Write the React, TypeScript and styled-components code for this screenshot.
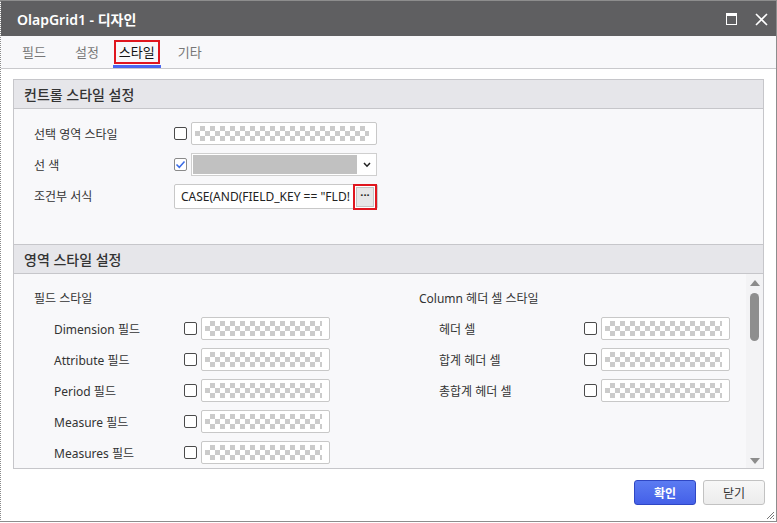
import React from 'react';
import styled, { createGlobalStyle } from 'styled-components';

const GlobalStyle = createGlobalStyle`
    html, body {
        margin: 0;
        padding: 0;
        background: #ffffff;
    }
    body {
        font-family: "Noto Sans", "Noto Sans CJK KR", sans-serif;
        color: #333;
    }
`;

interface StyleRow {
    label: string;
}

interface TabInfo {
    name: string;
    gap: number;
}

const fieldRows: StyleRow[] = [
    { label: 'Dimension 필드' },
    { label: 'Attribute 필드' },
    { label: 'Period 필드' },
    { label: 'Measure 필드' },
    { label: 'Measures 필드' },
];

const headerRows: StyleRow[] = [
    { label: '헤더 셀' },
    { label: '합계 헤더 셀' },
    { label: '총합계 헤더 셀' },
];

// gap = space after each tab
const tabs: TabInfo[] = [
    { name: '필드', gap: 17 },
    { name: '설정', gap: 8 },
    { name: '스타일', gap: 11 },
    { name: '기타', gap: 0 },
];

const MaximizeIcon = () => (
    <svg width="11" height="12" viewBox="0 0 11 12">
        <rect x="0.5" y="0.5" width="10" height="11" fill="none" stroke="#fff" strokeWidth="1" />
        <rect x="0" y="0" width="11" height="3" fill="#fff" />
    </svg>
);

const CloseIcon = () => (
    <svg width="13" height="13" viewBox="0 0 13 13">
        <path d="M1 1 L12 12 M12 1 L1 12" stroke="#fff" strokeWidth="1.6" />
    </svg>
);

const CheckMark = () => (
    <svg width="11" height="11" viewBox="0 0 11 11">
        <path d="M1.5 5.5 L4.3 8.3 L9.5 2.5" fill="none" stroke="#3a6be6" strokeWidth="1.5" />
    </svg>
);

const Chevron = () => (
    <svg width="8" height="6" viewBox="0 0 8 6">
        <path d="M1 1 L4 4.2 L7 1" fill="none" stroke="#222" strokeWidth="1.5" />
    </svg>
);

const ResizeGrip = () => (
    <svg width="9" height="9" viewBox="0 0 9 9">
        <path d="M8 1 L1 8 M8 4 L4 8 M8 7 L7 8" stroke="#777" strokeWidth="1" />
    </svg>
);

const App = () => {
    return (
        <>
            <GlobalStyle />
            <Window>
                <TitleBar>
                    <Title>OlapGrid1 - 디자인</Title>
                    <TitleIcons>
                        <MaximizeIcon />
                        <CloseIcon />
                    </TitleIcons>
                </TitleBar>

                <TabBar>
                    {tabs.map(tab => (
                        <Tab key={tab.name} active={tab.name === '스타일'} gap={tab.gap}>
                            <TabLabel marked={tab.name === '스타일'}>{tab.name}</TabLabel>
                        </Tab>
                    ))}
                </TabBar>

                <Content>
                    <Panel>
                        <SectionHeader>컨트롤 스타일 설정</SectionHeader>
                        <ControlBody>
                            <FormRow>
                                <FormLabel>선택 영역 스타일</FormLabel>
                                <CheckBox />
                                <Swatch wide />
                            </FormRow>
                            <FormRow>
                                <FormLabel>선 색</FormLabel>
                                <CheckBox checked><CheckMark /></CheckBox>
                                <ColorSelect>
                                    <ColorFill />
                                    <SelectArrow><Chevron /></SelectArrow>
                                </ColorSelect>
                            </FormRow>
                            <FormRow>
                                <FormLabel>조건부 서식</FormLabel>
                                <ExprInput>
                                    <ExprText>CASE(AND(FIELD_KEY == "FLD!</ExprText>
                                    <DotsButton>···</DotsButton>
                                </ExprInput>
                            </FormRow>
                        </ControlBody>

                        <SectionHeader bordered>영역 스타일 설정</SectionHeader>
                        <AreaBody>
                            <AreaScroll>
                                <AreaColumn fixed>
                                    <GroupTitle>필드 스타일</GroupTitle>
                                    {fieldRows.map(row => (
                                        <ItemRow key={row.label} labelWidth={130}>
                                            <ItemLabel>{row.label}</ItemLabel>
                                            <CheckBox />
                                            <Swatch />
                                        </ItemRow>
                                    ))}
                                </AreaColumn>
                                <AreaColumn>
                                    <GroupTitle>Column 헤더 셀 스타일</GroupTitle>
                                    {headerRows.map(row => (
                                        <ItemRow key={row.label} labelWidth={145}>
                                            <ItemLabel>{row.label}</ItemLabel>
                                            <CheckBox />
                                            <Swatch />
                                        </ItemRow>
                                    ))}
                                </AreaColumn>
                            </AreaScroll>
                            <ScrollBar>
                                <ArrowUp />
                                <Thumb />
                                <Spacer />
                                <ArrowDown />
                            </ScrollBar>
                        </AreaBody>
                    </Panel>
                </Content>

                <Footer>
                    <Button primary>확인</Button>
                    <Button>닫기</Button>
                    <Grip><ResizeGrip /></Grip>
                </Footer>
            </Window>
        </>
    );
};

const Window = styled.div`
    position: relative;
    box-sizing: border-box;
    width: 777px;
    height: 522px;
    border: 1px solid #8d8d8d;
    border-left: 1px dotted #8a8a8a;
    display: flex;
    flex-direction: column;
    background: #fff;
`;

const TitleBar = styled.div`
    height: 35px;
    flex-shrink: 0;
    background: #5f5f61;
    display: flex;
    align-items: center;
    justify-content: space-between;
    padding: 0 8px 0 16px;
`;

const Title = styled.div`
    color: #fff;
    font-size: 14px;
    font-weight: 600;
`;

const TitleIcons = styled.div`
    display: flex;
    align-items: center;
    gap: 18px;
    padding-top: 1px;
`;

const TabBar = styled.div`
    height: 33px;
    flex-shrink: 0;
    display: flex;
    align-items: stretch;
    padding-left: 15px;
    background: #f8f8fa;
    border-bottom: 1px solid #c9c9cc;
    box-sizing: border-box;
`;

const Tab = styled.div<{ active?: boolean; gap: number }>`
    display: flex;
    align-items: center;
    margin-right: ${p => p.gap}px;
    padding: 3px 4px 0;
    font-size: 13px;
    color: ${p => (p.active ? '#111' : '#777')};
    border-bottom: 3px solid ${p => (p.active ? '#4a66f0' : 'transparent')};
    box-sizing: border-box;
`;

const TabLabel = styled.span<{ marked?: boolean }>`
    padding: 0 2px;
    line-height: 18px;
    outline: ${p => (p.marked ? '2px solid #e0161e' : 'none')};
    outline-offset: 1px;
`;

const Content = styled.div`
    flex: 1;
    padding: 10px 12px 0 12px;
    display: flex;
    flex-direction: column;
`;

const Panel = styled.div`
    border: 1px solid #c6c6ca;
    display: flex;
    flex-direction: column;
    background: #f8f8fa;
`;

const SectionHeader = styled.div<{ bordered?: boolean }>`
    height: 28px;
    display: flex;
    align-items: center;
    padding-left: 10px;
    font-size: 14px;
    font-weight: 500;
    color: #333;
    background: #e6e6ea;
    border-bottom: 1px solid #c6c6ca;
    border-top: ${p => (p.bordered ? '1px solid #c6c6ca' : 'none')};
`;

const ControlBody = styled.div`
    height: 135px;
    box-sizing: border-box;
    padding: 13px 0 0 20px;
    display: flex;
    flex-direction: column;
    gap: 8px;
`;

const FormRow = styled.div`
    display: flex;
    align-items: center;
    height: 23px;
`;

const FormLabel = styled.div`
    width: 140px;
    font-size: 12px;
    color: #333;
`;

const CheckBox = styled.div<{ checked?: boolean }>`
    width: 13px;
    height: 13px;
    box-sizing: border-box;
    flex-shrink: 0;
    border: 1px solid ${p => (p.checked ? '#8a8a8a' : '#4a4a4a')};
    border-radius: 2px;
    background: #fff;
    margin-right: 4px;
    display: flex;
    align-items: center;
    justify-content: center;
`;

const Swatch = styled.div<{ wide?: boolean }>`
    width: ${p => (p.wide ? '186px' : '129px')};
    height: 23px;
    box-sizing: border-box;
    border: 1px solid #c8c8c8;
    border-radius: 2px;
    background-color: #fff;
    padding: 3px 7px 3px 3px;
    &::after {
        content: '';
        display: block;
        width: 100%;
        height: 100%;
        background-color: #fff;
        background-image: conic-gradient(#cbcbcb 25%, transparent 0 50%, #cbcbcb 0 75%, transparent 0);
        background-size: 10px 10px;
    }
`;

const ColorSelect = styled.div`
    width: 186px;
    height: 23px;
    box-sizing: border-box;
    border: 1px solid #cfcfcf;
    display: flex;
    background: #fff;
    padding: 1px 0 1px 1px;
`;

const ColorFill = styled.div`
    flex: 1;
    background: #c1c1c1;
`;

const SelectArrow = styled.div`
    width: 19px;
    display: flex;
    align-items: center;
    justify-content: center;
`;

const ExprInput = styled.div`
    width: 204px;
    height: 25px;
    box-sizing: border-box;
    border: 1px solid #c8c8c8;
    border-radius: 2px;
    background: #fff;
    display: flex;
    align-items: center;
    padding-left: 6px;
    margin-top: 2px;
`;

const ExprText = styled.div`
    flex: 1;
    font-size: 12px;
    color: #222;
    white-space: nowrap;
    overflow: hidden;
`;

const DotsButton = styled.div`
    width: 16px;
    height: 18px;
    margin: 0 3px 0 4px;
    border: 1px solid #c4c4c4;
    background: #e6e6e6;
    font-size: 11px;
    font-weight: 700;
    line-height: 14px;
    color: #222;
    text-align: center;
    outline: 2px solid #e0161e;
    outline-offset: 1px;
`;

const AreaBody = styled.div`
    height: 194px;
    display: flex;
`;

const AreaScroll = styled.div`
    flex: 1;
    display: flex;
    padding: 16px 0 0 20px;
    overflow: hidden;
`;

const AreaColumn = styled.div<{ fixed?: boolean }>`
    width: 385px;
    flex: ${p => (p.fixed ? '0 0 385px' : '1 1 auto')};
    display: flex;
    flex-direction: column;
    gap: 8px;
`;

const GroupTitle = styled.div`
    font-size: 12px;
    line-height: 18px;
    color: #333;
    margin-bottom: 1px;
`;

const ItemRow = styled.div<{ labelWidth: number }>`
    display: flex;
    align-items: center;
    height: 23px;
    padding-left: 20px;
    flex-shrink: 0;
    & > :first-child {
        width: ${p => p.labelWidth}px;
    }
`;

const ItemLabel = styled.div`
    font-size: 12px;
    color: #333;
`;

const ScrollBar = styled.div`
    width: 17px;
    background: #f3f3f5;
    display: flex;
    flex-direction: column;
    align-items: center;
    padding: 6px 0 4px;
    box-sizing: border-box;
`;

const ArrowUp = styled.div`
    width: 0;
    height: 0;
    border-left: 5px solid transparent;
    border-right: 5px solid transparent;
    border-bottom: 6px solid #8c8c8c;
`;

const ArrowDown = styled.div`
    width: 0;
    height: 0;
    border-left: 5px solid transparent;
    border-right: 5px solid transparent;
    border-top: 6px solid #8c8c8c;
`;

const Thumb = styled.div`
    width: 9px;
    height: 48px;
    margin-top: 7px;
    border-radius: 5px;
    background: #8e8e8e;
`;

const Spacer = styled.div`
    flex: 1;
`;

const Footer = styled.div`
    flex: 1;
    display: flex;
    justify-content: flex-end;
    align-items: flex-start;
    gap: 7px;
    padding: 11px 11px 0 0;
    position: relative;
`;

const Button = styled.div<{ primary?: boolean }>`
    width: 62px;
    height: 25px;
    box-sizing: border-box;
    display: flex;
    align-items: center;
    justify-content: center;
    border-radius: 3px;
    font-size: 12px;
    font-weight: ${p => (p.primary ? 700 : 400)};
    color: ${p => (p.primary ? '#fff' : '#333')};
    background: ${p => (p.primary ? 'linear-gradient(#5b7bf2, #4460e8)' : 'linear-gradient(#f7f7f7, #ececec)')};
    border: 1px solid ${p => (p.primary ? '#2f47c4' : '#c2c2c2')};
`;

const Grip = styled.div`
    position: absolute;
    right: 1px;
    bottom: 1px;
    line-height: 0;
`;

export default App;
